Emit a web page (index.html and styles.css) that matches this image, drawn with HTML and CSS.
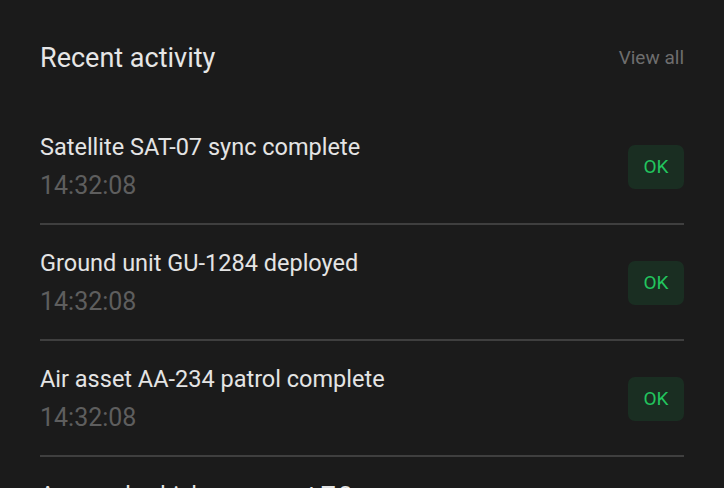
FILE: index.html
```html
<!DOCTYPE html>
<html lang="en">
<head>
<meta charset="utf-8">
<title>Recent activity</title>
<link rel="stylesheet" href="styles.css">
</head>
<body>
<section class="panel">
  <header class="panel-header">
    <h2 class="panel-title">Recent activity</h2>
    <a class="view-all" href="#">View all</a>
  </header>
  <ul class="activity-list">
    <li class="activity-row">
      <div class="activity-text">
        <div class="activity-title">Satellite SAT-07 sync complete</div>
        <div class="activity-time">14:32:08</div>
      </div>
      <span class="badge">OK</span>
    </li>
    <li class="activity-row">
      <div class="activity-text">
        <div class="activity-title">Ground unit GU-1284 deployed</div>
        <div class="activity-time">14:32:08</div>
      </div>
      <span class="badge">OK</span>
    </li>
    <li class="activity-row">
      <div class="activity-text">
        <div class="activity-title">Air asset AA-234 patrol complete</div>
        <div class="activity-time">14:32:08</div>
      </div>
      <span class="badge">OK</span>
    </li>
    <li class="activity-row">
      <div class="activity-text">
        <div class="activity-title">Armored vehicle convoy at T-3</div>
        <div class="activity-time">14:32:08</div>
      </div>
      <span class="badge">OK</span>
    </li>
  </ul>
</section>
</body>
</html>
```

FILE: styles.css
```css
html, body {
  margin: 0;
  padding: 0;
  background: #1b1b1b;
  height: 100%;
  overflow: hidden;
}

body {
  font-family: Roboto, "Liberation Sans", sans-serif;
  color: #e4e4e4;
}

.panel {
  padding: 42px 40px 0 40px;
}

.panel-header {
  display: flex;
  justify-content: space-between;
  align-items: center;
  height: 32px;
  margin-bottom: 35px;
}

.panel-title {
  margin: 0;
  font-size: 27px;
  line-height: 32px;
  font-weight: 400;
  color: #e6e6e6;
}

.view-all {
  font-size: 19px;
  line-height: 24px;
  color: #6e6e6e;
  text-decoration: none;
  margin-top: -1px;
}

.activity-list {
  list-style: none;
  margin: 0;
  padding: 0;
}

.activity-row {
  display: flex;
  align-items: center;
  justify-content: space-between;
  padding: 22px 0 21px 0;
  border-bottom: 2px solid #3f3f3f;
}

.activity-text {
  display: flex;
  flex-direction: column;
  gap: 7px;
}

.activity-title {
  font-size: 23.5px;
  line-height: 32px;
  color: #e4e4e4;
}

.activity-time {
  font-size: 25px;
  line-height: 32px;
  color: #5e5e5e;
}

.badge {
  display: flex;
  align-items: center;
  justify-content: center;
  width: 56px;
  height: 44px;
  border-radius: 7px;
  background: #1a2e22;
  color: #22c55e;
  font-size: 19px;
}
```
